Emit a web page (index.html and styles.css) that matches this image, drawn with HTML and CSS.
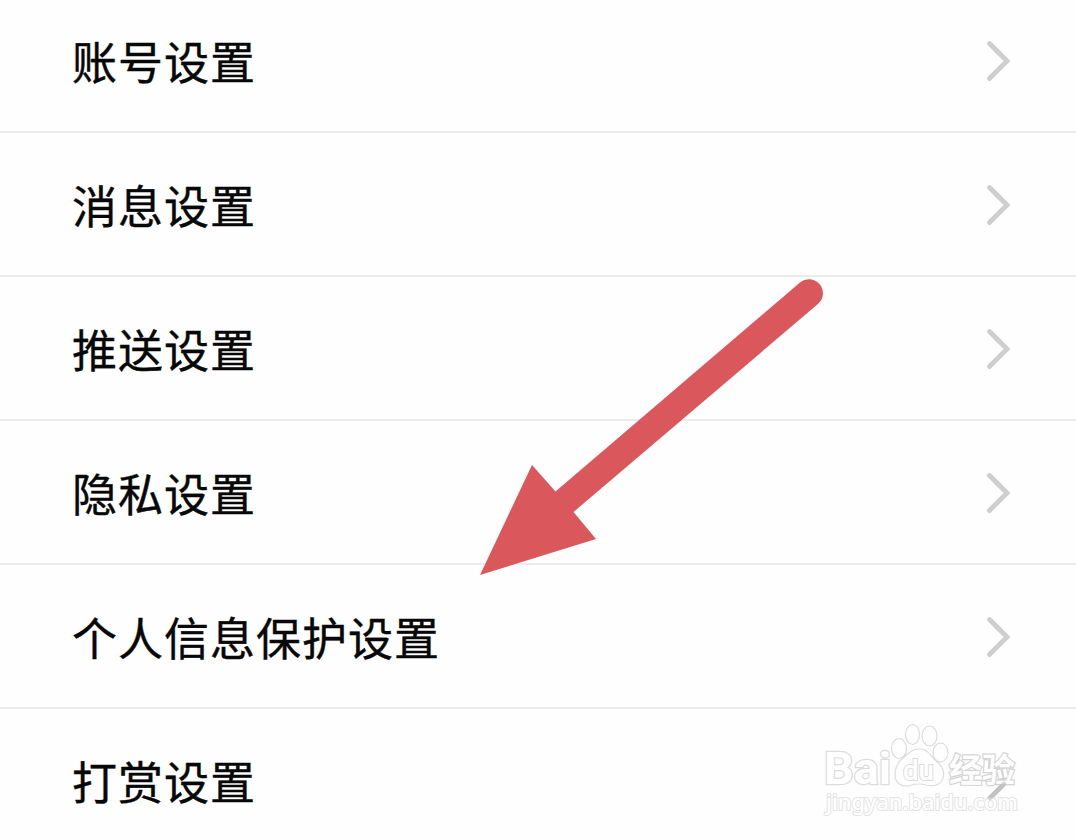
FILE: index.html
```html
<!DOCTYPE html>
<html lang="zh-CN">
<head>
<meta charset="utf-8">
<title>设置</title>
<link rel="stylesheet" href="styles.css">
</head>
<body>
<main class="screen">
  <ul class="settings">
    <li class="row"><span class="label">账号设置</span><svg class="chevron" viewBox="0 0 26 42"><path d="M4.500 3.500 22 21 4.500 38.500"/></svg></li>
    <li class="row"><span class="label">消息设置</span><svg class="chevron" viewBox="0 0 26 42"><path d="M4.500 3.500 22 21 4.500 38.500"/></svg></li>
    <li class="row"><span class="label">推送设置</span><svg class="chevron" viewBox="0 0 26 42"><path d="M4.500 3.500 22 21 4.500 38.500"/></svg></li>
    <li class="row"><span class="label">隐私设置</span><svg class="chevron" viewBox="0 0 26 42"><path d="M4.500 3.500 22 21 4.500 38.500"/></svg></li>
    <li class="row"><span class="label">个人信息保护设置</span><svg class="chevron" viewBox="0 0 26 42"><path d="M4.500 3.500 22 21 4.500 38.500"/></svg></li>
    <li class="row"><span class="label">打赏设置</span><svg class="chevron" viewBox="0 0 26 42"><path d="M4.500 3.500 22 21 4.500 38.500"/></svg></li>
  </ul>
  <svg class="arrow" viewBox="0 0 344 298">
    <path d="M0 297 52 187 75.500 213.500 320 4.500A14 14 0 0 1 338.500 25.500L93.500 234 116 261Z"/>
  </svg>
  <svg class="watermark" viewBox="0 0 210 110">
    <g class="mark">
      <text class="latin" x="8" y="69" textLength="67" lengthAdjust="spacingAndGlyphs">Bai</text>
      <ellipse cx="83" cy="33.500" rx="7.500" ry="10"/>
      <ellipse cx="96.500" cy="19.500" rx="7" ry="10"/>
      <ellipse cx="113.500" cy="21" rx="7.500" ry="10"/>
      <ellipse cx="124.500" cy="37.500" rx="7.500" ry="9.500"/>
      <path d="M87 43C92 39 95 34 103.500 34C112 34 114 40 119 45C124 49 128 53 127.500 60C127 70 118 72 110 70Q103 68 96 70C87 73 79 69 79 60C79 52 82 47 87 43Z"/>
      <text class="du" x="87" y="64.500" textLength="31" lengthAdjust="spacingAndGlyphs">du</text>
      <text class="han" x="133" y="67" textLength="66" lengthAdjust="spacingAndGlyphs">经验</text>
      <text class="url" x="10" y="95" textLength="192" lengthAdjust="spacingAndGlyphs">jingyan.baidu.com</text>
    </g>
    <path class="glint" d="M188 69 174 83"/>
  </svg>
</main>
</body>
</html>
```
FILE: styles.css
```css
body {
  margin: 0;
  background: #fefefe;
  font-family: "Noto Sans CJK SC", sans-serif;
}
.screen {
  position: relative;
  height: 840px;
  overflow: hidden;
}
.settings {
  list-style: none;
  margin: -11px 0 0;
  padding: 0;
}
.row {
  box-sizing: border-box;
  height: 144px;
  padding: 0 65px 0 72px;
  display: flex;
  align-items: center;
  justify-content: space-between;
  border-bottom: 2px solid #ebebeb;
}
.row:last-child { border-bottom-color: transparent; }
.label {
  font-size: 45px;
  letter-spacing: 1px;
  line-height: 66px;
  color: #080808;
  padding-top: 2px;
  -webkit-text-stroke: 0.4px #080808;
}
.chevron {
  width: 26px;
  height: 42px;
  margin-top: 2px;
  fill: none;
  stroke: #cecece;
  stroke-width: 4.800;
  stroke-linecap: round;
}
.arrow {
  position: absolute;
  left: 480px;
  top: 278px;
  width: 344px;
  height: 298px;
  fill: #da575c;
}
.watermark {
  position: absolute;
  left: 816px;
  top: 715px;
  width: 210px;
  height: 110px;
}
.mark {
  fill: #fff;
  stroke: #dcdcdc;
  stroke-width: 1.200;
}
.latin {
  font-family: Roboto, "Liberation Sans", sans-serif;
  font-size: 44px;
  font-weight: 700;
  paint-order: stroke;
  stroke-width: 2.400;
}
.du {
  font-family: Roboto, "Liberation Sans", sans-serif;
  font-size: 27px;
  font-weight: 500;
  paint-order: stroke;
  stroke-width: 2;
}
.han {
  font-size: 33px;
  font-weight: 700;
  paint-order: stroke;
  stroke: #d4d4d4;
  stroke-width: 2.400;
}
.url {
  font-family: "Noto Sans", "Open Sans", sans-serif;
  font-size: 21px;
  font-weight: 500;
  paint-order: stroke;
  stroke: #e4e4e4;
  stroke-width: 2;
}
.glint {
  fill: none;
  stroke: #bdbdbd;
  stroke-opacity: 0.700;
  stroke-width: 4.500;
  stroke-linecap: round;
}
```
